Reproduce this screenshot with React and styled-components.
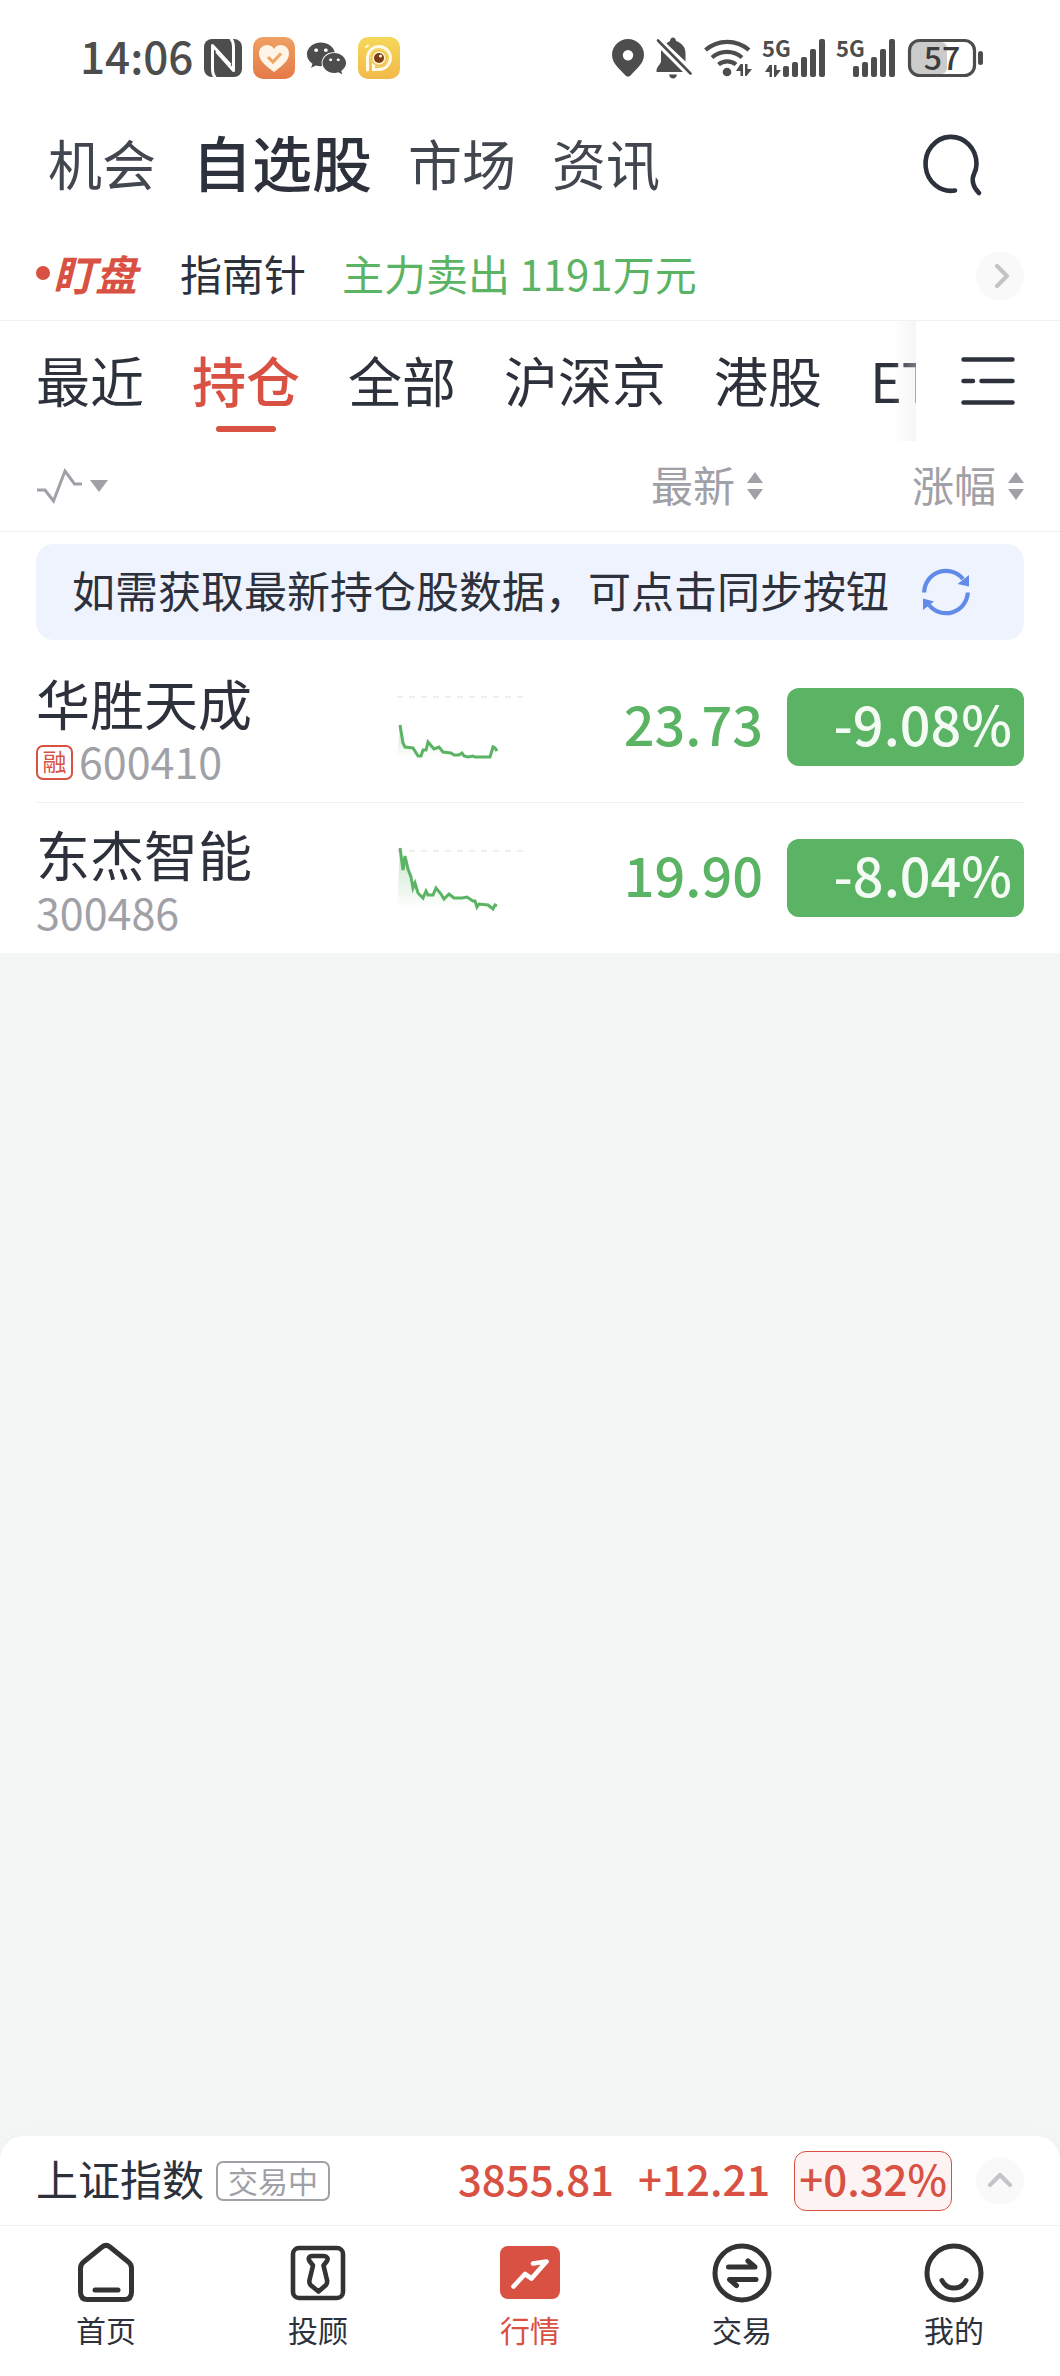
import React from "react";
import styled, { createGlobalStyle, css } from "styled-components";
import { FaWeixin } from "react-icons/fa";

const c = {
  ink: "#2d313c",
  inkSoft: "#42464f",
  status: "#4d4d4d",
  muted: "#a0a0a7",
  red: "#d85143",
  green: "#5ab464",
  line: "#f1f1f2",
  page: "#f4f6f6",
  pill: "#f9f9fa",
};

const GlobalStyle = createGlobalStyle`
  * { box-sizing: border-box; }
  body { margin: 0; background: ${c.page}; }
  body, button { font-family: "Noto Sans CJK SC", "Noto Sans", sans-serif; }
  svg { display: block; flex: none; overflow: visible; }
`;

const bareButton = css`
  border: 0;
  padding: 0;
  background: none;
  color: inherit;
  cursor: pointer;
`;

const Screen = styled.div`
  display: flex;
  flex-direction: column;
  min-height: 100vh;
  color: ${c.ink};
`;

const Sheet = styled.div`
  background: #fff;
`;

/* ---------- status bar ---------- */

const StatusBar = styled.div`
  display: flex;
  align-items: center;
  justify-content: space-between;
  height: 116px;
  padding: 0 76px 0 80px;
  color: ${c.status};
`;

const StatusGroup = styled.div`
  display: flex;
  align-items: center;
  gap: ${(p) => p.$gap}px;
`;

const Clock = styled.time`
  padding-bottom: 6px;
  font-size: 44px;
  line-height: 48px;
  font-weight: 500;
`;

/* ---------- main navigation ---------- */

const MainNav = styled.nav`
  display: flex;
  align-items: center;
  gap: 36px;
  height: 96px;
  padding: 0 76px 0 48px;
`;

const NavLink = styled.a`
  padding-bottom: ${(p) => (p.$active ? 6 : 2)}px;
  font-size: ${(p) => (p.$active ? 60 : 54)}px;
  line-height: 64px;
  font-weight: ${(p) => (p.$active ? 500 : 400)};
  color: ${(p) => (p.$active ? c.ink : c.inkSoft)};
  text-decoration: none;
`;

const SearchButton = styled.button`
  ${bareButton}
  margin-left: auto;
`;

/* ---------- alert strip ---------- */

const AlertStrip = styled.div`
  display: flex;
  align-items: center;
  padding: 20px 36px 0;
  height: 109px;
  border-bottom: 1px solid ${c.line};
  font-size: 42px;
  line-height: 48px;
`;

const AlertLogo = styled.span`
  display: flex;
  align-items: center;
  gap: 3px;
  margin-right: 43px;
  padding-bottom: 6px;
  color: ${c.red};
  font-weight: 700;
  font-style: italic;

  &::before {
    content: "";
    width: 14px;
    height: 14px;
    border-radius: 50%;
    background: currentColor;
  }
`;

const AlertText = styled.span`
  margin-right: 36px;
  padding-bottom: 6px;
  color: ${(p) => (p.$down ? c.green : c.ink)};
`;

const RoundButton = styled.button`
  ${bareButton}
  display: grid;
  place-items: center;
  width: 48px;
  height: 48px;
  border-radius: 50%;
  background: ${c.pill};
  margin-left: ${(p) => (p.$push ? "auto" : "0")};
`;

/* ---------- group tabs ---------- */

const TabBar = styled.div`
  display: flex;
  height: 120px;
`;

const TabScroller = styled.div`
  position: relative;
  flex: 1;
  min-width: 0;
  display: flex;
  gap: 48px;
  padding-left: 36px;
  overflow: hidden;

  &::after {
    content: "";
    position: absolute;
    inset: 0 0 0 auto;
    width: 24px;
    background: linear-gradient(to right, rgba(236, 236, 238, 0), rgba(232, 232, 234, 0.4));
  }
`;

const Tab = styled.button`
  ${bareButton}
  flex: none;
  display: flex;
  flex-direction: column;
  align-items: center;
  gap: 14px;
  padding-top: 27px;
  font-size: 54px;
  line-height: 64px;
  font-weight: ${(p) => (p.$active ? 500 : 400)};
  color: ${(p) => (p.$active ? c.red : c.ink)};

  &::after {
    content: "";
    width: 60px;
    height: 6px;
    border-radius: 3px;
    background: ${(p) => (p.$active ? c.red : "transparent")};
  }
`;

const MenuButton = styled.button`
  ${bareButton}
  display: grid;
  place-items: center;
  width: 144px;
`;

/* ---------- quotes table ---------- */

const QuoteTable = styled.table`
  display: block;
`;

const columns = css`
  display: grid;
  grid-template-columns: minmax(0, 1fr) 128px 262px 237px;
  align-items: center;
`;

const HeadRow = styled.tr`
  ${columns}
  height: 91px;
  padding: 0 36px;
  border-bottom: 1px solid ${c.line};
`;

const TableHead = styled.thead`
  display: block;
`;

const TableBody = styled.tbody`
  display: block;
`;

const HeadCell = styled.th`
  display: flex;
  justify-content: ${(p) => (p.$start ? "flex-start" : "flex-end")};
  padding: ${(p) => (p.$inset ? "0 24px 0 0" : "0")};
  font-weight: 400;
`;

const SortButton = styled.button`
  ${bareButton}
  display: flex;
  align-items: center;
  gap: ${(p) => p.$gap || 12}px;
  color: ${c.muted};
  font-size: 42px;
  line-height: 48px;
`;

const SortLabel = styled.span`
  padding-bottom: 4px;
`;

const BannerRow = styled.tr`
  display: block;
  padding: 12px 36px;
`;

const Banner = styled.td`
  display: flex;
  align-items: center;
  gap: 33px;
  height: 96px;
  padding: 0 36px;
  border-radius: 18px;
  background: #eef3fe;
  font-size: 43px;
  line-height: 52px;
`;

const BannerText = styled.span`
  padding-bottom: 6px;
`;

const SyncButton = styled.button`
  ${bareButton}
`;

const QuoteRow = styled.tr`
  ${columns}
  height: 151px;
  margin: 0 36px;
  border-bottom: 1px solid ${c.line};

  &:last-child {
    height: 150px;
    border-bottom: 0;
  }
`;

const Cell = styled.td`
  padding: 0;
`;

const NameCell = styled.td`
  padding: 8px 0 0;
`;

const StockName = styled.div`
  margin-bottom: 3px;
  font-size: 54px;
  line-height: 60px;
`;

const StockCode = styled.div`
  display: flex;
  align-items: center;
  gap: 6px;
  color: ${c.muted};
`;

const CodeDigits = styled.span`
  padding-bottom: 6px;
  font-size: 43px;
  line-height: 48px;
`;

const MarginTag = styled.span`
  display: flex;
  justify-content: center;
  width: 37px;
  height: 35px;
  border: 2px solid ${c.red};
  border-radius: 7px;
  color: ${c.red};
  font-size: 24px;
  line-height: 28px;
`;

const PriceCell = styled.td`
  padding: 0 24px 8px 0;
  text-align: right;
  font-size: 54px;
  line-height: 64px;
  font-weight: 500;
  color: ${c.green};
`;

const ChangeCell = styled.td`
  height: 78px;
  padding: 3px 12px 0 0;
  border-radius: 12px;
  background: ${c.green};
  color: #f3fbf4;
  text-align: right;
  font-size: 54px;
  line-height: 64px;
  font-weight: 500;
`;

/* ---------- footer ---------- */

const Footer = styled.footer`
  margin-top: auto;
  border-radius: 24px 24px 0 0;
  background: #fff;
  box-shadow: 0 -4px 24px rgba(0, 0, 0, 0.02);
`;

const IndexBar = styled.div`
  display: flex;
  align-items: center;
  height: 90px;
  padding: 0 36px;
  border-bottom: 1px solid ${c.line};
`;

const IndexName = styled.span`
  padding-bottom: 6px;
  font-size: 42px;
  line-height: 48px;
`;

const SessionTag = styled.span`
  display: flex;
  align-items: center;
  height: 40px;
  margin: 0 auto 0 12px;
  padding: 0 10px 2px;
  border: 2px solid ${c.muted};
  border-radius: 7px;
  color: ${c.muted};
  font-size: 30px;
  line-height: 32px;
`;

const IndexFigure = styled.span`
  margin-right: 24px;
  padding-bottom: 6px;
  color: ${c.red};
  font-size: 42px;
  line-height: 48px;
  font-weight: 500;
`;

const IndexPercent = styled.span`
  height: 60px;
  margin-right: 24px;
  padding: 2px 4px 0;
  border: 1px solid ${c.red};
  border-radius: 12px;
  background: #fdf3f2;
  color: ${c.red};
  font-size: 42px;
  line-height: 48px;
  font-weight: 500;
`;

const BottomNav = styled.nav`
  display: grid;
  grid-template-columns: repeat(5, 1fr);
  height: 150px;
`;

const BottomLink = styled.a`
  display: flex;
  flex-direction: column;
  align-items: center;
  gap: 8px;
  padding-top: 17px;
  font-size: 30px;
  line-height: 36px;
  color: ${(p) => (p.$active ? c.red : c.ink)};
  text-decoration: none;
`;

/* ---------- icons ---------- */

const NfcIcon = () => (
  <svg width="38" height="38" viewBox="0 0 38 38">
    <rect width="38" height="38" rx="8" fill={c.status} />
    <path fill="none" stroke="#fff" strokeWidth="3" strokeLinejoin="round" d="M11.500 38.500c-2.500-2-3-4.500-3-9V6.500L26.500 26" />
    <path fill="none" stroke="#fff" strokeWidth="3" strokeLinejoin="round" d="M26.500-.5c2.500 2 3 4.500 3 9v23L12.500 12.500" />
  </svg>
);

const HeartAppIcon = () => (
  <svg width="42" height="42" viewBox="0 0 42 42">
    <defs>
      <linearGradient id="heartApp" x1="0" y1="0" x2="0" y2="1">
        <stop offset="0" stopColor="#efa062" />
        <stop offset="1" stopColor="#e57a49" />
      </linearGradient>
    </defs>
    <rect width="42" height="42" rx="10" fill="url(#heartApp)" />
    <path fill="#fef4e8" d="M21 35C15 30.500 6 24.500 6 16.500 6 11.500 9.500 8 14 8c3 0 5.500 1.500 7 4 1.500-2.500 4-4 7-4 4.500 0 8 3.500 8 8.500 0 8-9 14-15 18.500z" />
    <path fill="none" stroke="#f0a55e" strokeWidth="3" d="M15 20l5 5 8-8.500" />
  </svg>
);

const CameraAppIcon = () => (
  <svg width="42" height="42" viewBox="0 0 42 42">
    <defs>
      <linearGradient id="cameraApp" x1="0" y1="0" x2="0" y2="1">
        <stop offset="0" stopColor="#f5d85a" />
        <stop offset="1" stopColor="#f2b94a" />
      </linearGradient>
    </defs>
    <rect width="42" height="42" rx="10" fill="url(#cameraApp)" />
    <path fill="none" stroke="#fffbe6" strokeWidth="3" strokeLinecap="round" d="M9.500 33V20a11.500 11.500 0 1 1 11.500 12.500h-5.500V26" />
    <circle cx="21" cy="21" r="8.500" fill="#fff3c4" />
    <circle cx="21" cy="21" r="7.500" fill="none" stroke="#eebd4b" strokeWidth="1.500" />
    <circle cx="21" cy="21" r="5" fill="#7a3d14" />
    <circle cx="22.500" cy="19" r="1.500" fill="#fff" />
    <path stroke="#fffbe6" strokeWidth="2" strokeLinecap="round" d="M8 10l2-1.500" />
  </svg>
);

const PinIcon = () => (
  <svg width="32" height="38" viewBox="0 0 32 38">
    <path fill={c.status} fillRule="evenodd" d="M16 0a16 16 0 0 1 16 16c0 9-9 15-13.500 20.500a3.300 3.300 0 0 1-5 0C9 31 0 25 0 16A16 16 0 0 1 16 0zm0 11a5.200 5.200 0 1 0 0 10.400A5.200 5.200 0 0 0 16 11z" />
  </svg>
);

const MutedBellIcon = () => (
  <svg width="36" height="42" viewBox="0 0 36 42" fill={c.status}>
    <path d="M5 13v11c0 3-4.500 6-4.500 9.500V35H27z" />
    <path d="M10.500 6.500C12 5 13 4.500 14 4c.3-2 1.300-3.500 3-3.500S19.700 2 20 4c6 2 9.500 6.500 9.500 12v8.500z" />
    <path d="M13 37.500h8c-.5 2.500-2 4-4 4s-3.500-1.500-4-4z" />
    <path fill="none" stroke={c.status} strokeWidth="2.600" strokeLinecap="round" d="M2 3.500l32.500 33" />
  </svg>
);

const DataArrows = ({ x, y }) => (
  <g transform={`translate(${x} ${y})`} fill={c.status}>
    <path d="M4.500 0h2.500v12H4.500V7H0z" />
    <path d="M9 0h2.500v5H16l-5.500 7H9z" />
  </g>
);

const WifiIcon = () => (
  <svg width="48" height="38" viewBox="0 0 48 38">
    <g fill="none" stroke={c.status} strokeWidth="4.200">
      <path d="M1.500 11a33 33 0 0 1 43.500 0" />
      <path d="M8 18.500a23 23 0 0 1 30 0" />
      <path d="M14.500 25.500a13.500 13.500 0 0 1 17.500 0" />
    </g>
    <circle cx="23" cy="33" r="4.300" fill={c.status} />
    <DataArrows x={32} y={25} />
  </svg>
);

const SignalIcon = ({ data }) => {
  const w = data ? 62 : 58;
  const heights = [11, 15, 20, 28, 38];
  return (
    <svg width={w} height="38" viewBox={`0 0 ${w} 38`} fill={c.status}>
      <text x="-2" y="18" fontSize="22" fontWeight="700">
        5G
      </text>
      {data && <DataArrows x={1} y={26} />}
      {heights.map((h, i) => (
        <rect key={h} x={w - 43 + i * 9} y={38 - h} width="6" height={h} rx="2" />
      ))}
    </svg>
  );
};

const BatteryIcon = () => (
  <svg width="76" height="38" viewBox="0 0 76 38">
    <rect x="3" y="3" width="36" height="32" rx="6" fill="#cbcbcb" />
    <rect x="1.500" y="1.500" width="65" height="35" rx="10" fill="none" stroke={c.status} strokeWidth="3.200" />
    <rect x="70" y="12" width="5" height="14" rx="2.500" fill={c.status} />
    <text x="34" y="31" textAnchor="middle" fontSize="32" fontWeight="500" fill="#3c3c3c">
      57
    </text>
  </svg>
);

const SearchIcon = () => (
  <svg width="62" height="62" viewBox="0 0 62 62" fill="none" stroke={c.ink} strokeWidth="4.600" strokeLinecap="round">
    <path d="M33 57.500A25.500 27 0 1 1 54.500 31c0 4-1 7-2.500 10-2.500 5-1.500 13 5 19" />
  </svg>
);

const Chevron = ({ up }) => (
  <svg width="28" height="28" viewBox="0 0 28 28" fill="none" stroke="#c3c4c8" strokeWidth="4.200" strokeLinecap="round" strokeLinejoin="round">
    <path d={up ? "M4 18l10-10 10 10" : "M11 4l10 10-10 10"} />
  </svg>
);

const MenuIcon = () => (
  <svg width="54" height="48" viewBox="0 0 54 48" stroke={c.ink} strokeWidth="4.500" strokeLinecap="round">
    <path d="M2.500 2.500h49M2.500 24h9.500M20.500 24h31M2.500 45.500h49" />
  </svg>
);

const TrendIcon = () => (
  <svg width="46" height="38" viewBox="0 0 46 38" fill="none" stroke={c.muted} strokeWidth="3">
    <path d="M1 23h8l8.500 11L29 4l9.500 13H46" />
  </svg>
);

const CaretIcon = () => (
  <svg width="18" height="12" viewBox="0 0 18 12" fill={c.muted}>
    <path d="M0 0h18L9 12z" />
  </svg>
);

const SortIcon = () => (
  <svg width="16" height="28" viewBox="0 0 16 28" fill={c.muted}>
    <path d="M8 0l8 11H0zM0 17h16L8 28z" />
  </svg>
);

const SyncIcon = () => (
  <svg width="48" height="48" viewBox="0 0 48 48">
    <g fill="none" stroke="#628be9" strokeWidth="4.200">
      <path d="M2.200 24.500A21.800 21.800 0 0 1 41 11" />
      <path d="M45.800 24.500A21.800 21.800 0 0 1 7 37" />
    </g>
    <path fill="#628be9" d="M47 7v11.500L35.500 16zM1 30.500l11 3L1 42z" />
  </svg>
);

const Sparkline = ({ id, base, points }) => (
  <svg width="128" height="80" viewBox="0 0 128 80">
    <defs>
      <linearGradient id={id} x1="0" y1="0" x2="0" y2="1">
        <stop offset="0" stopColor={c.green} stopOpacity="0.35" />
        <stop offset="1" stopColor={c.green} stopOpacity="0" />
      </linearGradient>
    </defs>
    <path d={`M0 ${base}H127`} stroke="#efeff0" strokeWidth="2" strokeDasharray="6 6" />
    <polygon points={`0,70 ${points} 100,70`} fill={`url(#${id})`} />
    <polyline points={points} fill="none" stroke={c.green} strokeWidth="3" />
  </svg>
);

const dark = "#333333";

const HomeIcon = () => (
  <svg width="60" height="60" viewBox="0 0 60 60" fill="none" stroke={dark} strokeWidth="5" strokeLinecap="round" strokeLinejoin="round">
    <path d="M4.500 25.500c0-3 1-5 3-6.500L26 4c2.500-2 5.500-2 8 0l18.500 15c2 1.500 3 3.500 3 6.500V49c0 5-2.500 7.500-7 7.500h-37c-4.500 0-7-2.500-7-7.500z" />
    <path d="M19 47h23" />
  </svg>
);

const AdvisorIcon = () => (
  <svg width="60" height="60" viewBox="0 0 60 60" fill="none" stroke={dark} strokeWidth="4.600" strokeLinejoin="round">
    <rect x="5" y="5" width="50" height="50" rx="6" />
    <path d="M24 13h12c3 0 4.500 2.500 3 5l-3.500 4.500L39 37c.5 2 0 3.500-1 5l-7.500 6.500L22.500 42c-1-1.500-1.500-3-1-5L25 22.500 21.500 18c-1.500-2.500-.5-5 2.500-5z" />
  </svg>
);

const MarketIcon = () => (
  <svg width="60" height="60" viewBox="0 0 60 60">
    <rect y="3" width="60" height="53" rx="8" fill={c.red} />
    <path fill="none" stroke="#fff" strokeWidth="4.600" strokeLinecap="round" strokeLinejoin="round" d="M13.500 43.500L25 31l6.500 4.500L46.500 18.500 33 20.500" />
  </svg>
);

const TradeIcon = () => (
  <svg width="60" height="60" viewBox="0 0 60 60" fill="none" stroke={dark} strokeWidth="5" strokeLinecap="round" strokeLinejoin="round">
    <circle cx="30" cy="30" r="27" />
    <path d="M16.500 24H43l-7-6M44 36.500H17.500l7 6" />
  </svg>
);

const MineIcon = () => (
  <svg width="60" height="60" viewBox="0 0 60 60" fill="none" stroke={dark} strokeWidth="5" strokeLinecap="round">
    <circle cx="30" cy="30" r="27" />
    <path d="M18 37.500c2.500 5 6.500 7.500 12 7.500s9.500-2.500 12-7.500" />
  </svg>
);

/* ---------- data ---------- */

const sections = ["机会", "自选股", "市场", "资讯"];
const groups = ["最近", "持仓", "全部", "沪深京", "港股", "ETF"];

const quotes = [
  {
    name: "华胜天成",
    code: "600410",
    margin: true,
    price: "23.73",
    change: "-9.08%",
    base: 10,
    points:
      "3,38 6,56 8,60 16,61 21,69 24,69 26,63 29,63 31,55 37,62 42,60 46,65 54,66 57,68 62,68 65,66 67,69 71,70 76,69 78,70 93,70 96,60 98,61 100,64",
  },
  {
    name: "东杰智能",
    code: "300486",
    price: "19.90",
    change: "-8.04%",
    base: 13,
    points:
      "3,10 6,32 8,18 11,31 14,39 16,50 18,45 21,55 26,60 29,53 31,57 36,57 39,50 44,56 47,61 52,56 57,60 65,60 70,59 76,63 78,63 80,69 82,66 91,67 96,71 98,67 100,68",
  },
];

const destinations = [
  { label: "首页", Icon: HomeIcon },
  { label: "投顾", Icon: AdvisorIcon },
  { label: "行情", Icon: MarketIcon, active: true },
  { label: "交易", Icon: TradeIcon },
  { label: "我的", Icon: MineIcon },
];

export default function App() {
  return (
    <Screen>
      <GlobalStyle />
      <Sheet>
        <StatusBar>
          <StatusGroup $gap={11}>
            <Clock>14:06</Clock>
            <NfcIcon />
            <HeartAppIcon />
            <FaWeixin size={41} />
            <CameraAppIcon />
          </StatusGroup>
          <StatusGroup $gap={12}>
            <PinIcon />
            <MutedBellIcon />
            <WifiIcon />
            <SignalIcon data />
            <SignalIcon />
            <BatteryIcon />
          </StatusGroup>
        </StatusBar>

        <MainNav>
          {sections.map((s) => (
            <NavLink key={s} href="#" $active={s === "自选股"}>
              {s}
            </NavLink>
          ))}
          <SearchButton aria-label="搜索">
            <SearchIcon />
          </SearchButton>
        </MainNav>

        <AlertStrip>
          <AlertLogo>盯盘</AlertLogo>
          <AlertText>指南针</AlertText>
          <AlertText $down>主力卖出 1191万元</AlertText>
          <RoundButton $push aria-label="更多">
            <Chevron />
          </RoundButton>
        </AlertStrip>

        <TabBar>
          <TabScroller>
            {groups.map((g) => (
              <Tab key={g} $active={g === "持仓"}>
                {g}
              </Tab>
            ))}
          </TabScroller>
          <MenuButton aria-label="分组管理">
            <MenuIcon />
          </MenuButton>
        </TabBar>

        <QuoteTable>
          <TableHead>
            <HeadRow>
              <HeadCell $start>
                <SortButton $gap={8} aria-label="走势">
                  <TrendIcon />
                  <CaretIcon />
                </SortButton>
              </HeadCell>
              <HeadCell />
              <HeadCell $inset>
                <SortButton>
                  <SortLabel>最新</SortLabel>
                  <SortIcon />
                </SortButton>
              </HeadCell>
              <HeadCell>
                <SortButton>
                  <SortLabel>涨幅</SortLabel>
                  <SortIcon />
                </SortButton>
              </HeadCell>
            </HeadRow>
          </TableHead>
          <TableBody>
            <BannerRow>
              <Banner colSpan={4}>
                <BannerText>如需获取最新持仓股数据，可点击同步按钮</BannerText>
                <SyncButton aria-label="同步">
                  <SyncIcon />
                </SyncButton>
              </Banner>
            </BannerRow>
            {quotes.map((q) => (
              <QuoteRow key={q.code}>
                <NameCell>
                  <StockName>{q.name}</StockName>
                  <StockCode>
                    {q.margin && <MarginTag>融</MarginTag>}
                    <CodeDigits>{q.code}</CodeDigits>
                  </StockCode>
                </NameCell>
                <Cell>
                  <Sparkline id={`area${q.code}`} base={q.base} points={q.points} />
                </Cell>
                <PriceCell>{q.price}</PriceCell>
                <ChangeCell>{q.change}</ChangeCell>
              </QuoteRow>
            ))}
          </TableBody>
        </QuoteTable>
      </Sheet>

      <Footer>
        <IndexBar>
          <IndexName>上证指数</IndexName>
          <SessionTag>交易中</SessionTag>
          <IndexFigure>3855.81</IndexFigure>
          <IndexFigure>+12.21</IndexFigure>
          <IndexPercent>+0.32%</IndexPercent>
          <RoundButton aria-label="展开">
            <Chevron up />
          </RoundButton>
        </IndexBar>
        <BottomNav>
          {destinations.map(({ label, Icon, active }) => (
            <BottomLink key={label} href="#" $active={active}>
              <Icon />
              {label}
            </BottomLink>
          ))}
        </BottomNav>
      </Footer>
    </Screen>
  );
}
